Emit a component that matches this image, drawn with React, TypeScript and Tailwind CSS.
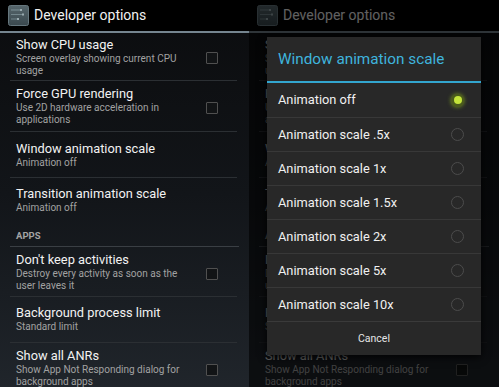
import React from 'react'

const font = { fontFamily: 'Roboto, "Noto Sans", Arial, sans-serif' }

type Pref = { title: string; summary: string[]; check?: boolean; h: string; pt: string }

const PREFS_TOP: Pref[] = [
  { title: 'Show CPU usage', summary: ['Screen overlay showing current CPU', 'usage'], check: true, h: 'h-[48px]', pt: 'pt-[4px]' },
  { title: 'Force GPU rendering', summary: ['Use 2D hardware acceleration in', 'applications'], check: true, h: 'h-[51px]', pt: 'pt-[5px]' },
  { title: 'Window animation scale', summary: ['Animation off'], h: 'h-[46px]', pt: 'pt-[9px]' },
  { title: 'Transition animation scale', summary: ['Animation off'], h: 'h-[44px]', pt: 'pt-[8px]' },
]

const PREFS_APPS: Pref[] = [
  { title: "Don't keep activities", summary: ['Destroy every activity as soon as the', 'user leaves it'], check: true, h: 'h-[50px]', pt: 'pt-[5px]' },
  { title: 'Background process limit', summary: ['Standard limit'], h: 'h-[46px]', pt: 'pt-[8px]' },
  { title: 'Show all ANRs', summary: ['Show App Not Responding dialog for', 'background apps'], check: true, h: 'h-[50px]', pt: 'pt-[5px]' },
]

const SCALES = [
  'Animation off',
  'Animation scale .5x',
  'Animation scale 1x',
  'Animation scale 1.5x',
  'Animation scale 2x',
  'Animation scale 5x',
  'Animation scale 10x',
]

// settings glyph in the action bar: grey-teal tile with faint slider lines
function SettingsIcon() {
  return (
    <svg width="21" height="21" viewBox="0 0 21 21">
      <defs>
        <linearGradient id="ic" x1="0" y1="0" x2="0" y2="1">
          <stop offset="0" stopColor="#56666c" />
          <stop offset="1" stopColor="#3a484e" />
        </linearGradient>
      </defs>
      <rect x="0.5" y="0.5" width="20" height="20" rx="2" fill="url(#ic)" stroke="#65767d" />
      <rect x="3" y="4.5" width="9" height="1" fill="#7d9096" />
      <rect x="12" y="4" width="2" height="2" fill="#9aabb0" />
      <rect x="3" y="9" width="11" height="1" fill="#73868c" />
      <rect x="14" y="8.5" width="2" height="2" fill="#9aabb0" />
      <rect x="3" y="13.5" width="6" height="1" fill="#73868c" />
      <rect x="9" y="13" width="2" height="2" fill="#9aabb0" />
    </svg>
  )
}

function PrefRow({ p, last }: { p: Pref; last?: boolean }) {
  return (
    <div className={`relative flex items-start ${p.h} ${p.pt} pl-4 pr-[31px]`}>
      <div className="flex-1">
        <p className="text-[12.8px] leading-[16px] text-[#f2f2f2] whitespace-nowrap">{p.title}</p>
        {p.summary.map(s => (
          <p key={s} className="text-[10px] leading-[12px] text-[#a2a2a2] whitespace-nowrap">{s}</p>
        ))}
      </div>
      {p.check && (
        <div className="self-center -mt-[2px] w-[12px] h-[12px] border border-[#505050] rounded-[1px] bg-[#121416]" />
      )}
      {!last && <div className="absolute bottom-0 left-[10px] right-[12px] h-px bg-[#2b2f33]" />}
    </div>
  )
}

function Screen({ dim }: { dim?: boolean }) {
  return (
    <div className="relative w-full h-full overflow-hidden bg-gradient-to-b from-[#0b0c0e] via-[#121519] to-[#20252b]">
      <div className="h-[31px] bg-black flex items-center pl-[8px] gap-[5px]">
        <SettingsIcon />
        <span className="text-[14px] text-[#f0f0f0] whitespace-nowrap">Developer options</span>
      </div>
      <div className="h-[2px] bg-[#75858f]" />
      {PREFS_TOP.map(p => <PrefRow key={p.title} p={p} last={p.title.startsWith('Transition')} />)}
      <div className="h-[24px] pl-4 pt-[8px] text-[9.5px] font-bold leading-[12px] text-[#a4a4a4]">APPS</div>
      <div className="mx-[10px] h-px bg-[#3a3f44]" />
      {PREFS_APPS.map(p => <PrefRow key={p.title} p={p} />)}
      {dim && <div className="absolute inset-0 bg-black/60" />}
    </div>
  )
}

function Radio({ on }: { on?: boolean }) {
  if (on) {
    return (
      <div className="w-[13px] h-[13px] rounded-full bg-[#4a5a1c] flex items-center justify-center shadow-[0_0_4px_#7a9a20]">
        <div className="w-[8px] h-[8px] rounded-full bg-[#c4e43a]" />
      </div>
    )
  }
  return <div className="w-[13px] h-[13px] rounded-full border-[1.5px] border-[#4c4c4c]" />
}

function Dialog() {
  return (
    <div className="absolute left-[18px] top-[37px] w-[214px] bg-[#282828] shadow-[0_2px_8px_rgba(0,0,0,0.85)]">
      <div className="h-[44px] flex items-center pl-[11px] text-[15.3px] text-[#3fb4dd] whitespace-nowrap">
        Window animation scale
      </div>
      <div className="h-[2px] bg-[#33a6cf]" />
      {SCALES.map((s, i) => (
        <div
          key={s}
          className={`h-[34px] flex items-center justify-between pl-[11px] pr-[17px] ${i > 0 ? 'border-t border-[#383838]' : ''}`}
        >
          <span className="text-[12.8px] text-[#f0f0f0]">{s}</span>
          <Radio on={i === 0} />
        </div>
      ))}
      <div className="h-[34px] border-t border-[#3a3a3a] flex items-center justify-center text-[10.5px] text-[#e6e6e6]">
        Cancel
      </div>
    </div>
  )
}

export default function App() {
  return (
    <div className="w-[499px] h-[387px] flex bg-black overflow-hidden" style={font}>
      <div className="w-[249px] h-full">
        <Screen />
      </div>
      <div className="relative w-[250px] h-full">
        <Screen dim />
        <Dialog />
      </div>
    </div>
  )
}
